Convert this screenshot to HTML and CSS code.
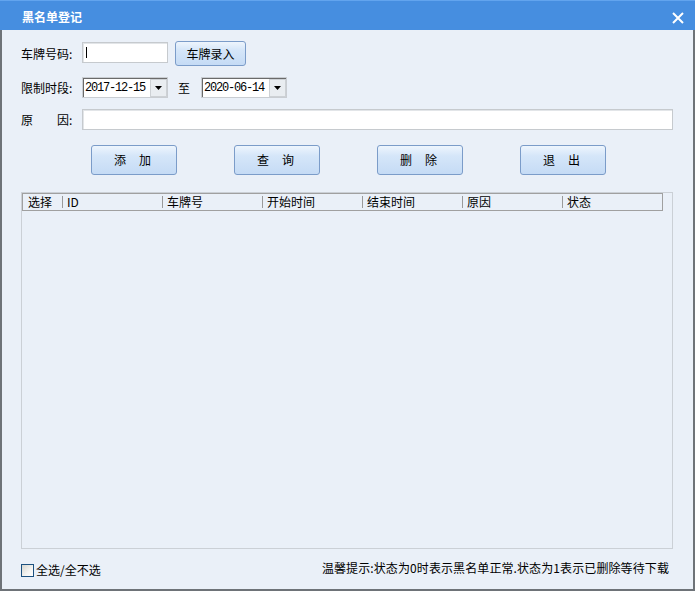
FILE: index.html
```html
<!DOCTYPE html>
<html lang="zh-CN">
<head>
<meta charset="utf-8">
<title>黑名单登记</title>
<link rel="stylesheet" href="styles.css">
</head>
<body>
<div class="window">
  <div class="titlebar">
    <span class="title">黑名单登记</span>
    <svg class="close" width="12" height="12" viewBox="0 0 12 12"><path d="M1 1 L11 11 M11 1 L1 11" stroke="#fff" stroke-width="2" fill="none"/></svg>
  </div>
  <div class="panel">
    <div class="row row-plate">
      <span class="lbl">车牌号码:</span>
      <div class="textbox plate"><span class="caret"></span></div>
      <button class="btn btn-small">车牌录入</button>
    </div>
    <div class="row row-date">
      <span class="lbl">限制时段:</span>
      <div class="combo">
        <div class="combo-inner">
          <span class="date">2017-12-15</span>
          <span class="drop"><svg width="7" height="4" viewBox="0 0 7 4"><path d="M0 0 H7 L3.5 4 Z" fill="#000"/></svg></span>
        </div>
      </div>
      <span class="to">至</span>
      <div class="combo">
        <div class="combo-inner">
          <span class="date">2020-06-14</span>
          <span class="drop"><svg width="7" height="4" viewBox="0 0 7 4"><path d="M0 0 H7 L3.5 4 Z" fill="#000"/></svg></span>
        </div>
      </div>
    </div>
    <div class="row row-reason">
      <span class="lbl lbl-spread"><span>原</span><span>因:</span></span>
      <div class="textbox reason"></div>
    </div>
    <div class="actions">
      <button class="btn btn-big"><span>添</span><span>加</span></button>
      <button class="btn btn-big"><span>查</span><span>询</span></button>
      <button class="btn btn-big"><span>删</span><span>除</span></button>
      <button class="btn btn-big"><span>退</span><span>出</span></button>
    </div>
    <div class="grid">
      <div class="grid-head">
        <div class="col col-first">选择</div>
        <div class="col"><span class="sep"></span>ID</div>
        <div class="col"><span class="sep"></span>车牌号</div>
        <div class="col"><span class="sep"></span>开始时间</div>
        <div class="col"><span class="sep"></span>结束时间</div>
        <div class="col"><span class="sep"></span>原因</div>
        <div class="col"><span class="sep"></span>状态</div>
      </div>
    </div>
    <div class="footer">
      <label class="check"><span class="box"></span><span>全选/全不选</span></label>
      <span class="tip">温馨提示:状态为0时表示黑名单正常.状态为1表示已删除等待下载</span>
    </div>
  </div>
</div>
</body>
</html>
```

FILE: styles.css
```css
* { box-sizing: border-box; }
html, body { margin: 0; padding: 0; }
body {
  font-family: "Noto Sans CJK SC", "Noto Sans", sans-serif;
  font-size: 12px;
  color: #000;
  background: #eaf0f8;
}
.window {
  width: 695px;
  height: 591px;
  display: flex;
  flex-direction: column;
}
.titlebar {
  height: 30px;
  flex: none;
  background: #468ee0;
  border-top: 1px solid #62a4ee;
  display: flex;
  align-items: flex-start;
  justify-content: space-between;
  padding: 0 11px 0 22px;
  color: #fff;
}
.title {
  font-weight: bold;
  font-size: 12px;
  line-height: 12px;
  margin-top: 10px;
}
.close { margin-top: 11px; display: block; }
.panel {
  flex: 1;
  border: 2px solid #6e7378;
  border-top: 0;
  padding: 11px 20px 0 19px;
  display: flex;
  flex-direction: column;
}
.row {
  display: flex;
  align-items: center;
  line-height: 14px;
}
.lbl { width: 61px; flex: none; }
.lbl-spread { display: flex; gap: 24px; }
.row-plate { height: 25px; }
.row-date { height: 21px; margin-top: 11px; }
.row-reason { height: 21px; margin-top: 11px; }
.textbox {
  height: 21px;
  background: #fff;
  border: 1px solid #c6cace;
  box-shadow: inset 1px 1px 0 #e2e5e8;
}
.plate {
  width: 86px;
  margin-right: 7px;
  align-self: flex-start;
  margin-top: 1px;
  padding: 4px 0 0 3px;
}
.caret { display: block; width: 1px; height: 11px; background: #000; }
.reason { flex: 1; }
.btn {
  border: 1px solid #7b9cc9;
  border-radius: 3px;
  background: linear-gradient(#eef5fd 0%, #d5e6f9 35%, #c5dbf5 100%);
  font: inherit;
  color: #000;
  padding: 0;
  display: flex;
  align-items: center;
  justify-content: center;
  line-height: 14px;
}
.btn-small { width: 71px; height: 25px; }
.btn-big { width: 86px; height: 30px; gap: 13px; padding-right: 3px; }
.combo {
  width: 86px;
  height: 21px;
  border: 1px solid #c9cdd2;
  flex: none;
}
.combo-inner {
  height: 100%;
  background: #fff;
  border-top: 1px solid #6a6a6a;
  border-left: 1px solid #6a6a6a;
  display: flex;
  align-items: center;
  justify-content: space-between;
}
.date {
  font-family: "Liberation Mono", "DejaVu Sans Mono", monospace;
  font-size: 12px;
  letter-spacing: -1.2px;
  padding-left: 1px;
}
.drop {
  width: 17px;
  height: 18px;
  background: #e9edf1;
  border: 1px solid #cdd1d5;
  display: flex;
  align-items: center;
  justify-content: center;
  align-self: flex-start;
}
.drop svg { display: block; }
.to { margin: 0 11px 0 10px; }
.actions {
  margin-top: 15px;
  height: 30px;
  flex: none;
  display: flex;
  gap: 57px;
  padding-left: 70px;
}
.grid {
  margin-top: 17px;
  height: 357px;
  flex: none;
  border: 1px solid #cbd0d6;
}
.grid-head {
  width: 641px;
  height: 18px;
  border: 1px solid #a0a0a0;
  display: flex;
  align-items: center;
  line-height: 14px;
}
.col {
  width: 100px;
  flex: none;
  display: flex;
  align-items: center;
}
.col-first { width: 39px; padding-left: 5px; }
.sep {
  width: 1px;
  height: 12px;
  background: #9a9a9a;
  margin-right: 4px;
}
.footer {
  flex: 1;
  display: flex;
  justify-content: space-between;
  align-items: flex-start;
  padding-top: 14px;
}
.check {
  display: flex;
  align-items: center;
  line-height: 14px;
  gap: 2px;
}
.box {
  width: 13px;
  height: 13px;
  border: 1px solid #1c5180;
  background: linear-gradient(135deg, #d6d6d0 0%, #f4f4f2 60%, #ffffff 100%);
}
.tip {
  font-size: 12px;
  letter-spacing: 0.1px;
  line-height: 15px;
  margin-top: -3px;
  margin-right: 4px;
}
```
